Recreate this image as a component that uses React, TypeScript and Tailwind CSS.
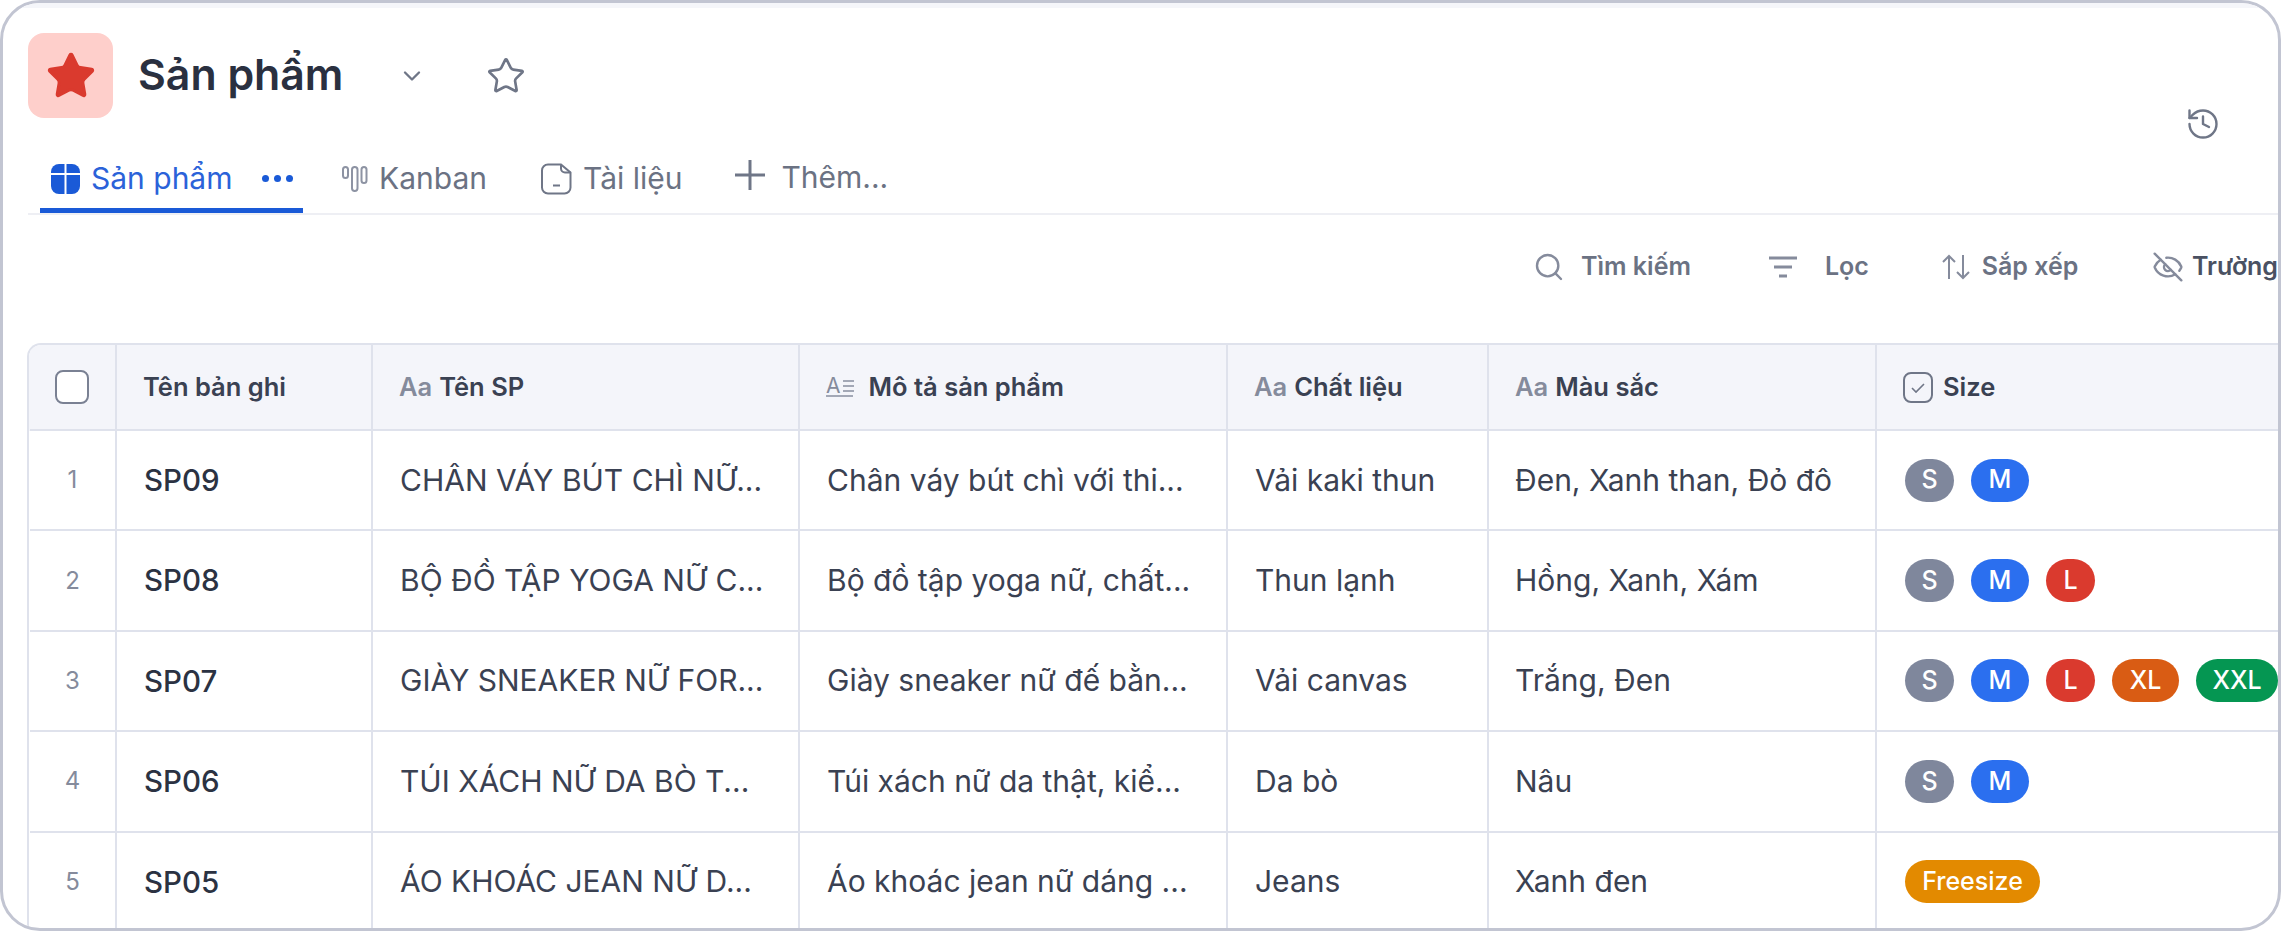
import { ChevronDown, Star, History, Search, EyeOff } from 'lucide-react';

const gridCols = 'grid grid-cols-[85px_256px_427px_428px_261px_388px_403px]';

const rows = [
  { id: 'SP09', name: 'CHÂN VÁY BÚT CHÌ NỮ...', desc: 'Chân váy bút chì với thi...', material: 'Vải kaki thun', color: 'Đen, Xanh than, Đỏ đô', sizes: ['S', 'M'] },
  { id: 'SP08', name: 'BỘ ĐỒ TẬP YOGA NỮ C...', desc: 'Bộ đồ tập yoga nữ, chất...', material: 'Thun lạnh', color: 'Hồng, Xanh, Xám', sizes: ['S', 'M', 'L'] },
  { id: 'SP07', name: 'GIÀY SNEAKER NỮ FOR...', desc: 'Giày sneaker nữ đế bằn...', material: 'Vải canvas', color: 'Trắng, Đen', sizes: ['S', 'M', 'L', 'XL', 'XXL'] },
  { id: 'SP06', name: 'TÚI XÁCH NỮ DA BÒ T...', desc: 'Túi xách nữ da thật, kiể...', material: 'Da bò', color: 'Nâu', sizes: ['S', 'M'] },
  { id: 'SP05', name: 'ÁO KHOÁC JEAN NỮ D...', desc: 'Áo khoác jean nữ dáng ...', material: 'Jeans', color: 'Xanh đen', sizes: ['Freesize'] },
];

const sizeStyles: Record<string, string> = {
  S: 'bg-[#7f879c] w-[49px]',
  M: 'bg-[#2b6fef] w-[58px]',
  L: 'bg-[#da3a2e] w-[49px]',
  XL: 'bg-[#d95c14] w-[67px]',
  XXL: 'bg-[#059652] w-[82px]',
  Freesize: 'bg-[#e38a00] w-[135px]',
};

const TypeMark = () => <span className="text-[25.5px] font-semibold text-[#858b9c] mr-[7px]">Aa</span>;

const HeaderCell = ({ children, first }: { children: React.ReactNode; first?: boolean }) => (
  <div className={`flex items-center h-[86px] border-b-[2px] border-[#dfe2ec] text-[25.5px] font-semibold text-[#3a4152] whitespace-nowrap ${first ? 'justify-center pr-[2px]' : 'pl-[26px] border-l-[2px]'}`}>
    {children}
  </div>
);

const TableIcon = () => (
  <svg width="29" height="30" viewBox="0 0 29 30" fill="none">
    <rect x="0" y="0" width="29" height="30" rx="8" fill="#1a5ad7" />
    <path d="M0 10h29M14.5 0v30" stroke="#fff" strokeWidth="2" />
  </svg>
);

const KanbanIcon = () => (
  <svg width="26" height="28" viewBox="0 0 26 28" fill="none" stroke="#8d93a3" strokeWidth="2">
    <rect x="1" y="2" width="5" height="11" rx="2.5" />
    <rect x="10" y="2" width="5.5" height="24" rx="2.7" />
    <rect x="19.5" y="2" width="5" height="16" rx="2.5" />
  </svg>
);

const DocIcon = () => (
  <svg width="31" height="32" viewBox="0 0 31 32" fill="none" stroke="#6f7687" strokeWidth="2">
    <path d="M7 1.5h13l9.5 8v15a6 6 0 0 1-6 6H7a6 6 0 0 1-6-6v-17a6 6 0 0 1 6-6z" />
    <path d="M20 1.5v4a4 4 0 0 0 4 4h5.5" />
    <path d="M12 22.5h7" />
  </svg>
);

const PlusIcon = () => (
  <svg width="30" height="30" viewBox="0 0 30 30" fill="none" stroke="#6f7687" strokeWidth="3">
    <path d="M0 15h30M15 0v30" />
  </svg>
);

const FilterIcon = () => (
  <svg width="30" height="22" viewBox="0 0 30 22" fill="none" stroke="#858b9c" strokeWidth="3">
    <path d="M1 2h28M6 11h18M11 20h8" />
  </svg>
);

const SortIcon = () => (
  <svg width="28" height="26" viewBox="0 0 28 26" fill="none" stroke="#858b9c" strokeWidth="2">
    <path d="M7 25V2M1 8l6-6 6 6M21 1v23M15 18l6 6 6-6" />
  </svg>
);

const SizeIcon = () => (
  <svg width="30" height="31" viewBox="0 0 30 31" fill="none" stroke="#6f7687" strokeWidth="2">
    <rect x="1" y="1" width="28" height="29" rx="7" />
    <path d="M9 16l4 4 8-8" strokeWidth="1.6" />
  </svg>
);

const Dots = () => (
  <span className="flex gap-[5px]">
    <i className="w-[7px] h-[7px] rounded-full bg-[#1a5ad7]" />
    <i className="w-[7px] h-[7px] rounded-full bg-[#1a5ad7]" />
    <i className="w-[7px] h-[7px] rounded-full bg-[#1a5ad7]" />
  </span>
);

const App = () => {
  return (
    <div className="w-[2281px] h-[934px] overflow-hidden bg-white font-['Inter',sans-serif]">
      <div className="relative h-[931px] border-[3px] border-[#c2c5d2] rounded-[40px] overflow-hidden bg-white">
        <div className="h-[5px] bg-[#f5f6fa]" />

        {/* Title */}
        <div className="flex items-center h-[85px] mt-[25px] ml-[25px]">
          <div className="flex items-center justify-center w-[85px] h-[85px] rounded-[16px] bg-[#fecfcb]">
            <Star size={52} fill="#da3a2e" stroke="#da3a2e" strokeWidth={1.4} />
          </div>
          <h1 className="ml-[25px] text-[42.8px] font-semibold text-[#2a3040]">Sản phẩm</h1>
          <ChevronDown size={28} className="ml-[55px] text-[#6f7687]" strokeWidth={2} />
          <Star size={40} className="ml-[60px] text-[#6f7687]" strokeWidth={1.6} />
        </div>

        {/* Tabs */}
        <div className="flex items-end h-[97px] ml-[25px] border-b-[2px] border-[#eeeff4] text-[30px]">
          <div className="flex items-center h-[60px] w-[263px] ml-[12px] pl-[11px] pb-[4px] border-b-[5px] border-[#1a5ad7] text-[#2b62d9]">
            <TableIcon />
            <span className="ml-[11px] w-[171px] whitespace-nowrap">Sản phẩm</span>
            <Dots />
          </div>
          <div className="flex items-center h-[60px] pb-[9px] ml-[39px] text-[#6b7283]">
            <KanbanIcon />
            <span className="ml-[11px]">Kanban</span>
            <span className="ml-[54px]"><DocIcon /></span>
            <span className="ml-[11px]">Tài liệu</span>
            <span className="ml-[53px] mb-[8px]"><PlusIcon /></span>
            <span className="ml-[16px] mb-[2px]">Thêm...</span>
          </div>
          <History size={36} strokeWidth={1.6} className="absolute right-[57px] top-[103px] text-[#6f7687]" />
        </div>

        {/* Toolbar */}
        <div className="flex items-center h-[128px] pb-[24px] pl-[1530px] whitespace-nowrap text-[25px] font-semibold text-[#6b7283]">
          <div className="flex items-center gap-[16px] w-[238px]">
            <Search size={32} strokeWidth={1.8} className="text-[#858b9c]" />
            <span>Tìm kiếm</span>
          </div>
          <div className="flex items-center gap-[27px] w-[176px]">
            <FilterIcon />
            <span>Lọc</span>
          </div>
          <div className="flex items-center gap-[12px] w-[213px]">
            <SortIcon />
            <span>Sắp xếp</span>
          </div>
          <div className="flex items-center gap-[8px] text-[#4a5162]">
            <EyeOff size={32} strokeWidth={1.8} className="text-[#858b9c]" />
            <span>Trường</span>
          </div>
        </div>

        {/* Table */}
        <div className="ml-[24px] w-fit border-t-[2px] border-l-[2px] border-[#dfe2ec] rounded-tl-[14px] overflow-hidden">
          <div className={`${gridCols} pl-[1px] bg-[#f4f5fa]`}>
            <HeaderCell first>
              <span className="w-[34px] h-[34px] rounded-[8px] border-[2px] border-[#7a8193] bg-white" />
            </HeaderCell>
            <HeaderCell>Tên bản ghi</HeaderCell>
            <HeaderCell><TypeMark />Tên SP</HeaderCell>
            <HeaderCell>
              <span className="flex flex-col gap-[1px] mr-[15px]">
                <span className="flex items-center h-[17px] text-[21px] font-normal text-[#858b9c]">
                  A
                  <span className="ml-[2px] flex flex-col gap-[3px]">
                    <i className="w-[11px] h-[2px] bg-[#a3a8b6]" />
                    <i className="w-[11px] h-[2px] bg-[#a3a8b6]" />
                    <i className="w-[11px] h-[2px] bg-[#a3a8b6]" />
                  </span>
                </span>
                <i className="w-[27px] h-[2px] bg-[#a3a8b6]" />
              </span>
              Mô tả sản phẩm
            </HeaderCell>
            <HeaderCell><TypeMark />Chất liệu</HeaderCell>
            <HeaderCell><TypeMark />Màu sắc</HeaderCell>
            <HeaderCell>
              <span className="mr-[10px]"><SizeIcon /></span>
              Size
            </HeaderCell>
          </div>
          {rows.map((row, index) => (
            <div key={row.id} className={`${gridCols} pl-[1px] h-[100.4px] text-[30px] text-[#3a4152] whitespace-nowrap`}>
              <div className="flex items-center justify-center border-b-[2px] border-[#dfe2ec] text-[24px] text-[#858b9c]">{index + 1}</div>
              <div className="flex items-center pl-[27px] border-b-[2px] border-l-[2px] border-[#dfe2ec] text-[29.5px] font-medium text-[#2b3242]">{row.id}</div>
              <div className="flex items-center pl-[27px] border-b-[2px] border-l-[2px] border-[#dfe2ec]">{row.name}</div>
              <div className="flex items-center pl-[27px] border-b-[2px] border-l-[2px] border-[#dfe2ec]">{row.desc}</div>
              <div className="flex items-center pl-[27px] border-b-[2px] border-l-[2px] border-[#dfe2ec]">{row.material}</div>
              <div className="flex items-center pl-[26px] border-b-[2px] border-l-[2px] border-[#dfe2ec]">{row.color}</div>
              <div className="flex items-center gap-[17px] pl-[28px] border-b-[2px] border-l-[2px] border-[#dfe2ec]">
                {row.sizes.map(size => (
                  <span key={size} className={`flex items-center justify-center h-[43px] rounded-full text-[25px] font-medium text-white ${sizeStyles[size]}`}>
                    {size}
                  </span>
                ))}
              </div>
            </div>
          ))}
        </div>
      </div>
    </div>
  );
};

export default App;
